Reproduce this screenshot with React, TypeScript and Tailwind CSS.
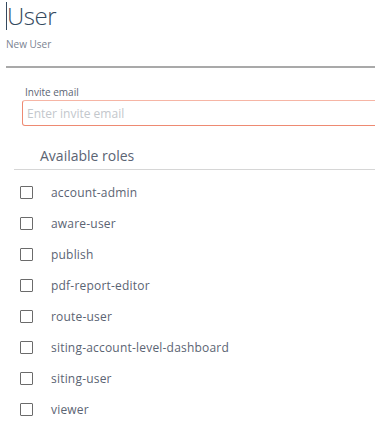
import React from "react";

const ROLES = [
  "account-admin",
  "aware-user",
  "publish",
  "pdf-report-editor",
  "route-user",
  "siting-account-level-dashboard",
  "siting-user",
  "viewer",
];

export default function App() {
  return (
    <div className="w-[375px] h-[429px] overflow-hidden bg-white font-['Open_Sans',sans-serif]">
      {/* Header */}
      <div className="pl-[6px] pt-[2px]">
        <div className="flex items-center h-[28px]">
          <div className="w-[1px] h-[28px] bg-[#34495e]" />
          <h1 className="text-[24px] leading-[28px] font-light text-[#34495e] tracking-[-0.5px]">User</h1>
        </div>
        <p className="mt-[8px] text-[10px] leading-[12px] text-[#7a8391]">New User</p>
      </div>

      <div className="ml-[6px] mt-[16px] h-[2px] bg-[#a9a9a9]" />

      {/* Invite email */}
      <div className="pl-[22px] mt-[18px]">
        <label className="block pl-[3px] text-[10px] leading-[12px] text-[#5b6473]">Invite email</label>
        <input
          placeholder="Enter invite email"
          className="mt-[2px] w-[400px] h-[26px] px-[4px] text-[12px] rounded-[3px] border border-[#ee8a72] border-t-[#f6b5a5] outline-none placeholder:text-[#c3c7cc]"
        />
      </div>

      {/* Roles */}
      <div className="mt-[20px]">
        <h2 className="pl-[40px] text-[14px] leading-[20px] text-[#5b6473]">Available roles</h2>
        <div className="ml-[14px] mt-[3px] h-[1px] bg-[#d6d6d6]" />
        <ul className="mt-[7px]">
          {ROLES.map(role => (
            <li key={role} className="flex items-center h-[31px] pl-[20px]">
              <span className="w-[13px] h-[13px] border-[1.5px] border-[#6b6b6b] rounded-[1px] shrink-0" />
              <span className="ml-[18px] text-[12px] text-[#5b6473] tracking-[0.2px]">{role}</span>
            </li>
          ))}
        </ul>
      </div>
    </div>
  );
}
